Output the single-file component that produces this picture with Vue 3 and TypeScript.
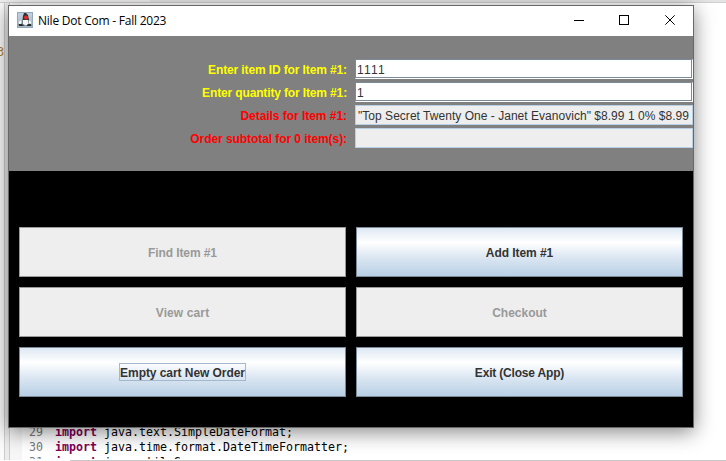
<script setup lang="ts">
interface Field { label: string; value: string; kind: 'input' | 'output'; fit: string }
interface Action { label: string; disabled?: boolean; focused?: boolean; fit?: string }

const fields: Field[] = [
  { label: 'Enter item ID for Item #1:', value: '1111', kind: 'input', fit: 'item' },
  { label: 'Enter quantity for Item #1:', value: '1', kind: 'input', fit: 'quantity' },
  { label: 'Details for Item #1:', value: '"Top Secret Twenty One - Janet Evanovich" $8.99 1 0% $8.99', kind: 'output', fit: 'details' },
  { label: 'Order subtotal for 0 item(s):', value: '', kind: 'output', fit: 'subtotal' },
]
const actions: Action[] = [
  { label: 'Find Item #1', disabled: true, fit: 'find' },
  { label: 'Add Item #1', fit: 'add' },
  { label: 'View cart', disabled: true, fit: 'view' },
  { label: 'Checkout', disabled: true },
  { label: 'Empty cart New Order', focused: true, fit: 'empty' },
  { label: 'Exit (Close App)', fit: 'exit' },
]
const code = [
  { n: 29, t: 'java.text.SimpleDateFormat;' },
  { n: 30, t: 'java.time.format.DateTimeFormatter;' },
  { n: 31, t: 'java.util.Scanner;' },
]
</script>

<template>
  <main class="desktop">
    <div class="editor">
      <div class="tabs"><span class="tab-light"></span><span class="tab-dark"></span></div>
      <div class="panes">
        <div class="explorer"><span class="stray">3</span></div>
        <div class="sash"></div>
        <div class="ruler"></div>
        <div class="source">
          <div v-for="l in code" :key="l.n" class="line">
            <span class="num">{{ l.n }}</span><span class="code"><b>import</b> {{ l.t }}</span>
          </div>
        </div>
      </div>
      <div class="scroll"></div>
    </div>

    <section class="window">
      <header class="titlebar">
        <svg class="duke" viewBox="0 0 16 16">
          <defs><linearGradient id="ice" x2="0" y2="1"><stop stop-color="#c3d2df" /><stop offset="1" stop-color="#a3b5c4" /></linearGradient></defs>
          <rect width="16" height="16" fill="url(#ice)" />
          <rect x=".5" y=".5" width="15" height="15" fill="none" stroke="#93a9bb" />
          <path d="M2 10L5 8H12L14 10L13 14H3Z" fill="#77828b" />
          <path d="M7 1H9L11 3L12 8H5.5L6 4Z" fill="#2b3238" />
          <path d="M6 8H11L11.5 12L9 13.5L6 12Z" fill="#f4f7f8" />
          <path d="M2 9.5L4.5 8V11.5L2 12.5ZM12 8L14 9.5V12L12 11.5Z" fill="#f4f7f8" />
          <path d="M1.5 12H5L7 14H2ZM11 12H14L14.5 14H9.5Z" fill="#272d32" />
          <circle cx="9" cy="5.6" r="2.1" fill="#e02826" />
        </svg>
        <span class="title">Nile Dot Com - Fall 2023</span>
        <svg class="controls" viewBox="0 0 102 30" shape-rendering="crispEdges">
          <path d="M0 14.5H10" stroke="#000" />
          <rect x="45.5" y="9.5" width="9" height="9" fill="none" stroke="#000" />
          <path d="M91.3 9.3L100.7 18.7M100.7 9.3L91.3 18.7" stroke="#000" shape-rendering="auto" />
        </svg>
      </header>
      <div class="form">
        <div v-for="f in fields" :key="f.label" class="row" :class="[f.kind, f.fit]">
          <label>{{ f.label }}</label>
          <div class="box">{{ f.value }}</div>
        </div>
      </div>
      <div class="actions">
        <button v-for="a in actions" :key="a.label" :disabled="a.disabled" type="button">
          <span :class="[a.fit, { focused: a.focused }]">{{ a.label }}</span>
        </button>
      </div>
    </section>
  </main>
</template>

<style>
body { margin: 0; overflow: hidden; }
</style>
<style scoped>
* { box-sizing: border-box; }
.desktop { position: relative; width: 726px; height: 461px; overflow: hidden; background: #fff; font-family: "Liberation Sans", Arial, sans-serif; }
.editor { display: flex; flex-direction: column; height: 461px; }
.tabs { display: flex; height: 3px; border-bottom: 1px solid #d0d0d0; }
.tab-light { width: 150px; background: #f0f0f0; }
.tab-dark { flex: 1; background: #e4e4e4; }
.panes { display: flex; flex: 1; min-height: 0; }
.explorer { width: 4px; background: #fafafa; overflow: hidden; }
.stray { display: block; margin: 41px 0 0 -3px; font: 12px/16px "DejaVu Sans Mono", monospace; color: #b07d2b; }
.sash { width: 6px; background: #ececec; border-left: 1px solid #ccc; border-right: 1px solid #ccc; }
.ruler { width: 12px; background: #f6f6f6; }
.source { flex: 1; margin-bottom: 1px; padding-top: 422px; overflow: hidden; }
.line { display: flex; height: 15px; font: 11.63px/15px "DejaVu Sans Mono", monospace; white-space: pre; color: #000; }
.num { width: 33px; padding-left: 7px; color: #787878; }
.code b { color: #7f0055; }
.scroll { height: 1px; margin-left: 70px; background: #c8c8c8; }
.window { position: absolute; left: 8px; top: 5px; width: 686px; height: 423px; border: 1px solid #686868; background: #000; box-shadow: 0 4px 19px rgba(0, 0, 0, .48); }
.titlebar { display: flex; height: 30px; background: #fff; align-items: flex-start; }
.duke { width: 16px; height: 16px; margin: 6px 0 0 8px; }
.title { flex: 1; margin: 6px 0 0 5px; font: 12px/17px "Open Sans", sans-serif; letter-spacing: -.23px; color: #000; white-space: nowrap; }
.controls { width: 102px; height: 30px; margin-right: 17px; }
.form { display: flex; flex-direction: column; gap: 3px; height: 135px; padding-top: 23px; background: #808080; }
.row { display: flex; gap: 8px; height: 20px; font-size: 12px; line-height: 22px; white-space: nowrap; }
.row label { width: 338px; text-align: right; font-weight: bold; color: #ff0; }
.output label { color: #f00; }
.item label { letter-spacing: -.12px; }
.quantity label { letter-spacing: -.14px; }
.details label { letter-spacing: -.04px; }
.subtotal label { letter-spacing: -.07px; }
.box { width: 338px; height: 20px; padding-left: 2px; background: #eee; border: 1px solid #b8cfe5; line-height: 20px; color: #333; overflow: hidden; letter-spacing: .03px; }
.input .box { padding-left: 1px; background: #fff; border-color: #7a8a99 #fff #fff #7a8a99; box-shadow: inset -1px -1px #7a8a99; font-kerning: none; letter-spacing: .33px; }
.actions { display: grid; grid-template-columns: 327px 327px; grid-auto-rows: 50px; gap: 10px; padding: 56px 10px 0; }
button { display: flex; align-items: center; justify-content: center; margin: 0; padding: 0; border: 1px solid #7a8a99; border-radius: 0; background: linear-gradient(#dde8f3 0%, #fff 30%, #dde8f3 60%, #b8cfe5 100%); font: bold 12px/16px "Liberation Sans", Arial, sans-serif; color: #333; white-space: nowrap; }
button:disabled { background: #eee; border-color: #999; color: #999; }
button span { height: 18px; line-height: 20px; }
.find { letter-spacing: -.1px; }
.add { letter-spacing: -.06px; }
.view { letter-spacing: .12px; }
.exit { letter-spacing: -.18px; }
.empty { padding: 0 1px; letter-spacing: -.06px; }
.focused { outline: 1px solid #a3b8cc; outline-offset: -1px; }
</style>
